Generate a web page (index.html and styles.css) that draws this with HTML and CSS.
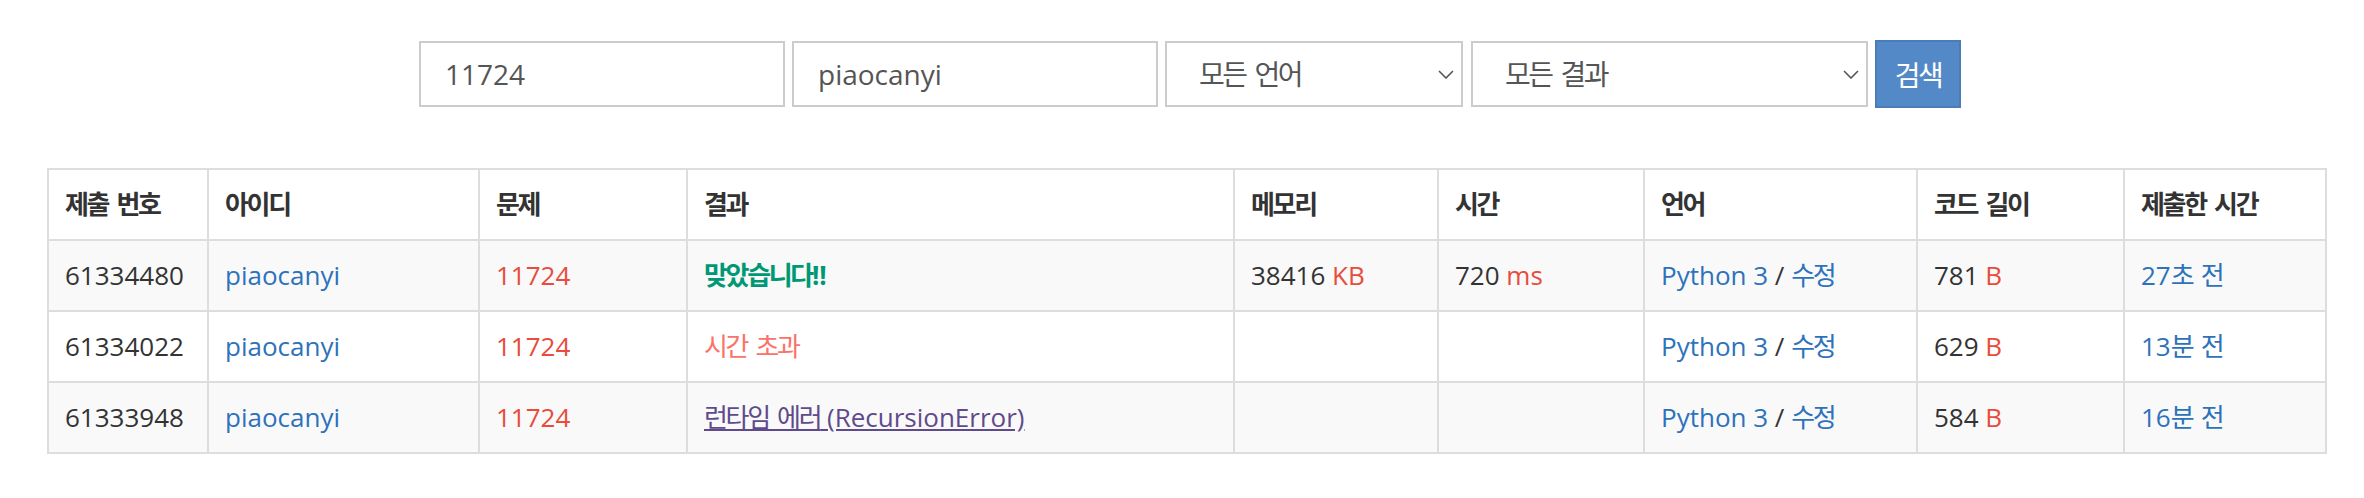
FILE: index.html
```html
<!DOCTYPE html>
<html>
<head>
  <meta charset="UTF-8">
  <title>채점 현황</title>
  <link rel="stylesheet" href="styles.css">
</head>
<body>
  <div class="page">
    <form class="search">
      <input type="text" class="field id-field" value="11724">
      <input type="text" class="field user-field" value="piaocanyi">
      <div class="select-wrap lang-wrap">
        <select class="field">
          <option>모든 언어</option>
        </select>
        <svg class="chevron" width="16" height="9" viewBox="0 0 16 9"><path d="M1 1 L8 8 L15 1" fill="none" stroke="#555" stroke-width="1.6"/></svg>
      </div>
      <div class="select-wrap result-wrap">
        <select class="field">
          <option>모든 결과</option>
        </select>
        <svg class="chevron" width="16" height="9" viewBox="0 0 16 9"><path d="M1 1 L8 8 L15 1" fill="none" stroke="#555" stroke-width="1.6"/></svg>
      </div>
      <button type="button" class="search-btn">검색</button>
    </form>

    <table class="status">
      <thead>
        <tr>
          <th class="c1">제출 번호</th>
          <th class="c2">아이디</th>
          <th class="c3">문제</th>
          <th class="c4">결과</th>
          <th class="c5">메모리</th>
          <th class="c6">시간</th>
          <th class="c7">언어</th>
          <th class="c8">코드 길이</th>
          <th class="c9">제출한 시간</th>
        </tr>
      </thead>
      <tbody>
        <tr>
          <td>61334480</td>
          <td><a href="#">piaocanyi</a></td>
          <td><a href="#" class="problem">11724</a></td>
          <td><span class="result-ac"><span class="ko">맞았습니다</span>!!</span></td>
          <td>38416 <span class="unit">KB</span></td>
          <td>720 <span class="unit">ms</span></td>
          <td><a href="#">Python 3</a> / <a href="#" class="ko">수정</a></td>
          <td>781 <span class="unit">B</span></td>
          <td><a href="#">27<span class="ko">초 전</span></a></td>
        </tr>
        <tr>
          <td>61334022</td>
          <td><a href="#">piaocanyi</a></td>
          <td><a href="#" class="problem">11724</a></td>
          <td><span class="ko result-tle">시간 초과</span></td>
          <td></td>
          <td></td>
          <td><a href="#">Python 3</a> / <a href="#" class="ko">수정</a></td>
          <td>629 <span class="unit">B</span></td>
          <td><a href="#">13<span class="ko">분 전</span></a></td>
        </tr>
        <tr>
          <td>61333948</td>
          <td><a href="#">piaocanyi</a></td>
          <td><a href="#" class="problem">11724</a></td>
          <td><a href="#" class="result-rte"><span class="ko">런타임 에러</span> (RecursionError)</a></td>
          <td></td>
          <td></td>
          <td><a href="#">Python 3</a> / <a href="#" class="ko">수정</a></td>
          <td>584 <span class="unit">B</span></td>
          <td><a href="#">16<span class="ko">분 전</span></a></td>
        </tr>
      </tbody>
    </table>
  </div>
</body>
</html>
```

FILE: styles.css
```css
body {
  margin: 0;
  background: #fff;
  font-family: "Open Sans", "Noto Sans CJK KR", sans-serif;
  color: #333;
}
.page {
  padding: 40px 0 0 47px;
  width: 2280px;
}
/* hangul from Noto is wider than the original font, so pull it in a bit */
.ko {
  letter-spacing: -0.09em;
  word-spacing: 0.15em;
}
.search {
  display: flex;
  align-items: center;
  justify-content: center;
  gap: 7px;
  padding-left: 6px;
  margin: 0 0 60px 0;
}
.field {
  box-sizing: border-box;
  height: 66px;
  padding: 0 24px;
  border: 2px solid #ccc;
  border-radius: 0;
  background: #fff;
  font-family: inherit;
  font-size: 28px;
  color: #555;
  outline: none;
}
.id-field,
.user-field {
  width: 366px;
}
.select-wrap {
  position: relative;
}
.select-wrap select {
  -webkit-appearance: none;
  appearance: none;
  width: 100%;
  padding-left: 32px;
  letter-spacing: -0.09em;
  word-spacing: 0.15em;
}
.lang-wrap {
  width: 298px;
}
.result-wrap {
  width: 397px;
  margin-left: 1px;
}
.chevron {
  position: absolute;
  right: 9px;
  top: 29px;
}
.search-btn {
  box-sizing: border-box;
  width: 86px;
  height: 68px;
  padding: 0;
  border: 2px solid #4a7cb7;
  border-radius: 0;
  background: #5389c7;
  color: #fff;
  font-family: inherit;
  font-size: 28px;
  letter-spacing: -0.09em;
  cursor: pointer;
}
.status {
  width: 2280px;
  table-layout: fixed;
  border-collapse: separate;
  border-spacing: 0;
  font-size: 26px;
  line-height: 37px;
}
.status th,
.status td {
  box-sizing: border-box;
  padding: 16px;
  text-align: left;
  border-right: 2px solid #ddd;
  border-bottom: 2px solid #ddd;
  white-space: nowrap;
}
.status th:first-child,
.status td:first-child {
  border-left: 2px solid #ddd;
}
.status th {
  border-top: 2px solid #ddd;
  font-weight: bold;
  letter-spacing: -0.09em;
  word-spacing: 0.15em;
}
.status tbody tr:nth-child(odd) {
  background: #f9f9f9;
}
.c1 { width: 162px; }
.c2 { width: 271px; }
.c3 { width: 208px; }
.c4 { width: 547px; }
.c5 { width: 204px; }
.c6 { width: 206px; }
.c7 { width: 273px; }
.c8 { width: 207px; }
.c9 { width: 202px; }
.status a {
  color: #2d72bb;
  text-decoration: none;
}
.status a.problem {
  color: #e74c3c;
}
.unit {
  color: #e74c3c;
}
.result-ac {
  color: #009874;
  font-weight: bold;
}
.result-tle {
  color: #fa7268;
}
.status a.result-rte {
  color: #5f4b8b;
  text-decoration: underline;
}
```
